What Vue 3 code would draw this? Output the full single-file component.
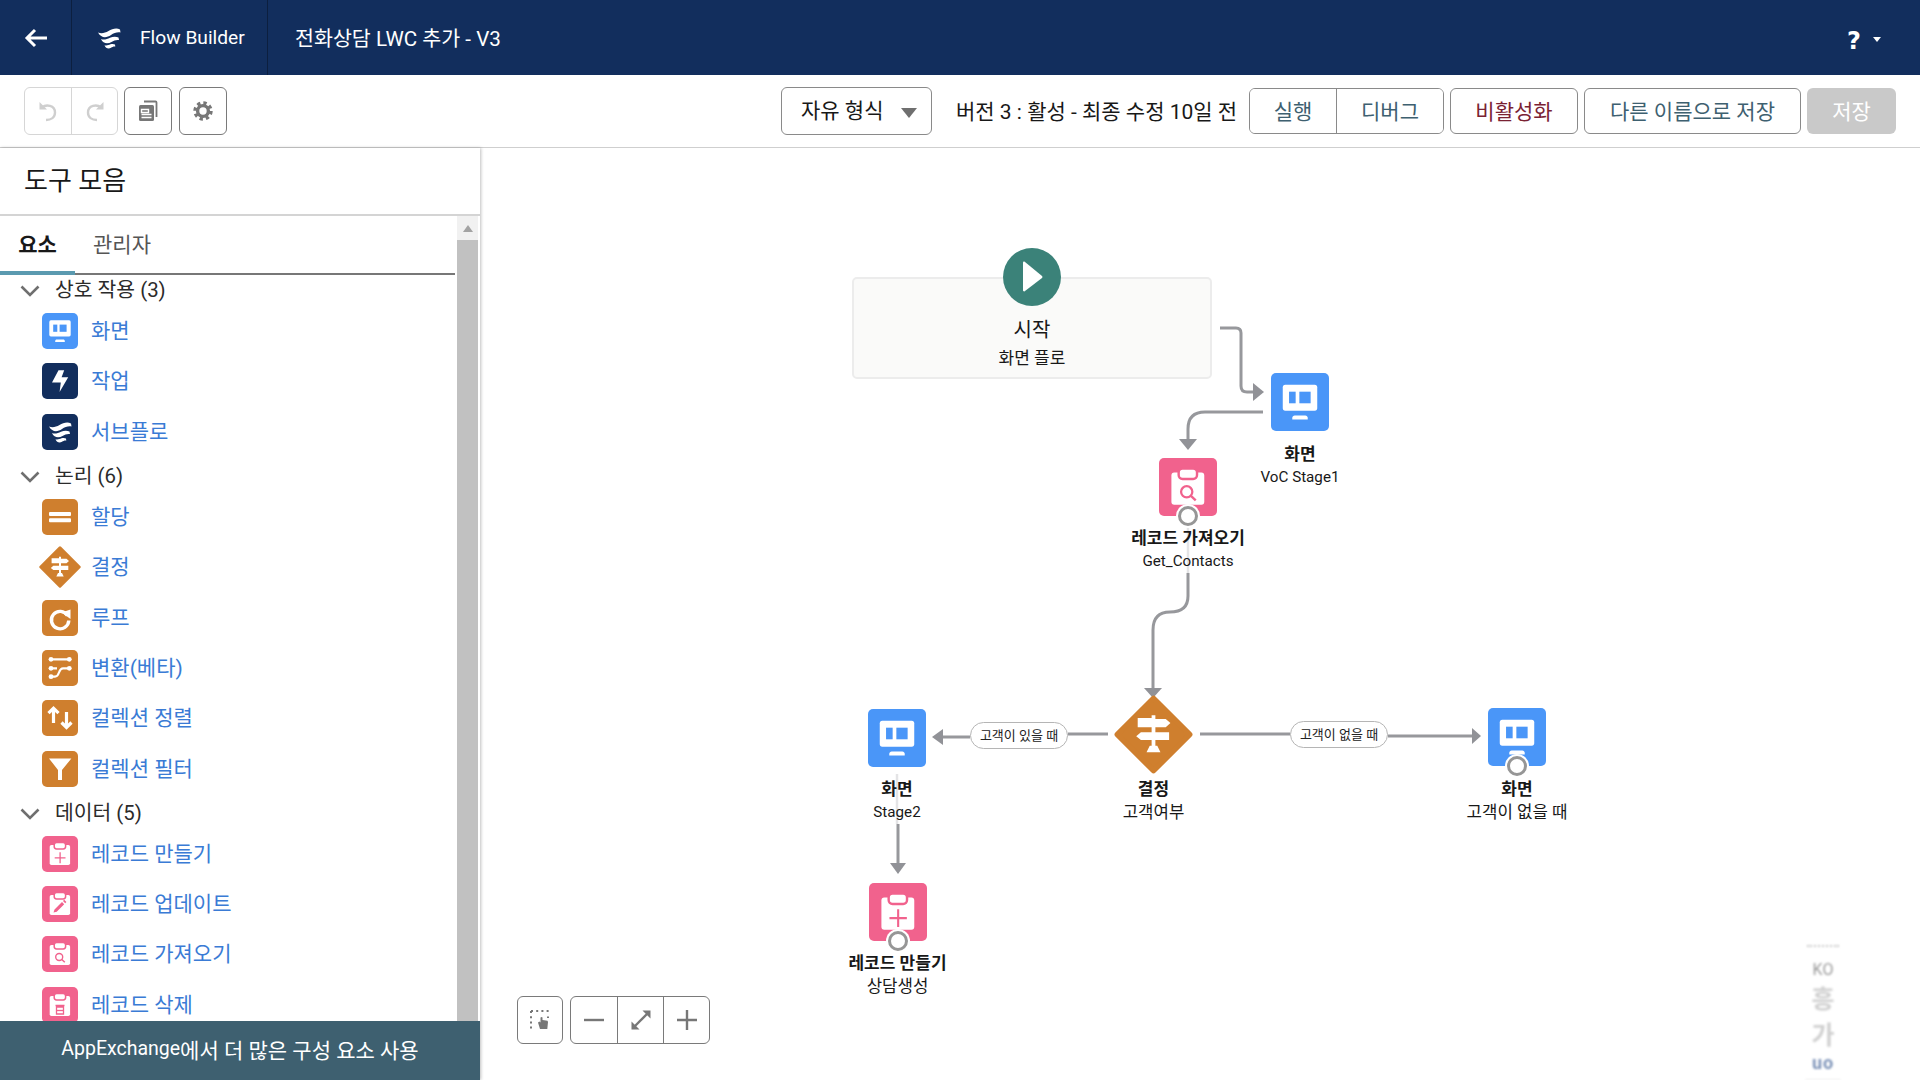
<script setup>
const sections = [
  { title: '상호 작용 (3)', first: true, items: [
    { t: '화면', i: 'screen', c: 'blue' }, { t: '작업', i: 'bolt', c: 'navy' }, { t: '서브플로', i: 'flow', c: 'navy' } ] },
  { title: '논리 (6)', items: [
    { t: '할당', i: 'equals', c: 'orange' }, { t: '결정', i: 'decision', c: 'none' }, { t: '루프', i: 'loop', c: 'orange' },
    { t: '변환(베타)', i: 'transform', c: 'orange' }, { t: '컬렉션 정렬', i: 'sort', c: 'orange' }, { t: '컬렉션 필터', i: 'filter', c: 'orange' } ] },
  { title: '데이터 (5)', items: [
    { t: '레코드 만들기', i: 'rec-add', c: 'pink' }, { t: '레코드 업데이트', i: 'rec-edit', c: 'pink' },
    { t: '레코드 가져오기', i: 'rec-find', c: 'pink' }, { t: '레코드 삭제', i: 'rec-del', c: 'pink' } ] }
]

const OX = 480
const OY = 148
const nodes = [
  { cx: 1300, top: 373, size: 58, i: 'screen', c: 'blue', label: '화면', sub: 'VoC Stage1', gap: 11, latin: true },
  { cx: 1188, top: 458, size: 58, i: 'rec-find', c: 'pink', label: '레코드 가져오기', sub: 'Get_Contacts', gap: 10, dot: true, latin: true },
  { cx: 897, top: 709, size: 58, i: 'screen', c: 'blue', label: '화면', sub: 'Stage2', gap: 10, latin: true },
  { cx: 1153.5, top: 695, size: 79, i: 'decision', c: 'none', label: '결정', sub: '고객여부', gap: 3 },
  { cx: 1517, top: 708, size: 58, i: 'screen', c: 'blue', label: '화면', sub: '고객이 없을 때', gap: 11, dot: true },
  { cx: 897.5, top: 883, size: 58, i: 'rec-add', c: 'pink', label: '레코드 만들기', sub: '상담생성', gap: 10, dot: true }
]
const pills = [
  { x: 970, y: 722, w: 98, t: '고객이 있을 때' },
  { x: 1290, y: 721, w: 98, t: '고객이 없을 때' }
]
function nodeStyle(n) {
  return { left: n.cx - OX - 100 + 'px', top: n.top - OY + 'px' }
}
function iconStyle(n) {
  return { width: n.size + 'px', height: n.size + 'px' }
}
function labelStyle(n) {
  return { marginTop: n.gap + 'px' }
}
function pillStyle(p) {
  return { left: p.x - OX + 'px', top: p.y - OY + 'px', width: p.w + 'px' }
}
</script>

<template>
  <div class="page">
    <svg class="defs" width="0" height="0" aria-hidden="true">
      <defs>
        <symbol id="i-screen" viewBox="0 0 36 36">
          <rect x="7.3" y="7.3" width="21.4" height="16.1" rx="1.6" fill="#fff" />
          <rect x="11.2" y="11.6" width="4.1" height="7.2" fill="#4a96f8" />
          <rect x="17.6" y="11.6" width="7" height="7.2" fill="#4a96f8" />
          <path d="M13.2 28.9v-1c0-.9.7-1.5 1.5-1.5h6.6c.8 0 1.5.6 1.5 1.5v1z" fill="#fff" />
        </symbol>
        <symbol id="i-bolt" viewBox="0 0 36 36">
          <path d="M16.5 7.3h5.7l-2.6 7h6.6L17.6 29l1.2-9.6H10z" fill="#fff" />
        </symbol>
        <symbol id="i-flow" viewBox="0 0 36 36">
          <path d="M7 12.500c3.500 1.500 7 .5 10.500-1.500 3.500-2 8-3.500 11.500-1.500l.5 3c-3.500-.5-6.500.5-9.500 2.500-4.500 3-9.500 3.500-13-2.500z" fill="#fff" />
          <path d="M10 19c3 1.300 6 0 9-1.300 2.800-1.200 6-1.500 8.500-.2l.5 2.500c-3-.4-5 .5-7.500 2-3.500 2-8.500 2-10.500-3z" fill="#fff" />
          <path d="M13.500 25.200c2 .8 4-.2 6-.9 1.700-.5 3.200-.5 4.500.3l.3 2c-1.800-.3-3 .4-4.300 1.200-2.300 1.300-5.300.8-6.500-2.600z" fill="#fff" />
        </symbol>
        <symbol id="i-equals" viewBox="0 0 36 36">
          <rect x="7" y="13" width="22" height="4" rx="1" fill="#fff" />
          <rect x="7" y="19.300" width="22" height="4" rx="1" fill="#fff" />
        </symbol>
        <symbol id="i-decision" viewBox="0 0 42 42">
          <path d="M21 1.800 40.200 21 21 40.200 1.800 21z" fill="#cf7f2e" stroke="#cf7f2e" stroke-width="3" stroke-linejoin="round" />
          <path d="M20 10.700h2v2h5.500l2.500 2.200-2.500 2.300H22v2.600h7.300v4.100H22V27h1l1.700 3.400h-7.400L19 27h1v-3.100h-5.700l-2.500-2 2.500-2.100H20v-2.600h-7.400v-5H20z" fill="#fff" />
        </symbol>
        <symbol id="i-loop" viewBox="0 0 36 36">
          <path d="M25.500 15.500a8.700 8.700 0 1 0 1.300 5" fill="none" stroke="#fff" stroke-width="3.400" />
          <path d="M19.500 12.500 28.500 9.500v9.500z" fill="#fff" />
        </symbol>
        <symbol id="i-transform" viewBox="0 0 36 36" >
          <g fill="none" stroke="#fff" stroke-width="2.200">
            <path d="M9 9.300h18.300M9 18.300h6M9 26.700h4c5 0 3-8.400 8-8.400h6.300" />
          </g>
          <g fill="#fff">
            <circle cx="9" cy="9.300" r="2.400" /><circle cx="27.300" cy="9.300" r="2.400" />
            <circle cx="9" cy="18.300" r="2.400" /><circle cx="27.300" cy="18.300" r="2.400" />
            <circle cx="9" cy="26.700" r="2.400" />
          </g>
        </symbol>
        <symbol id="i-sort" viewBox="0 0 36 36">
          <g fill="none" stroke="#fff" stroke-width="3.200">
            <path d="M11.500 9v14M6.500 13.200l5-5 5 5M24.500 12v15M19.500 22.500l5 5 5-5" />
          </g>
        </symbol>
        <symbol id="i-filter" viewBox="0 0 36 36">
          <path d="M7 7.400h22.400L20 19v10h-4V19z" fill="#fff" />
        </symbol>
        <symbol id="i-clip" viewBox="0 0 36 36">
          <rect x="7.700" y="9" width="20.400" height="20" rx="1.800" fill="#fff" />
          <rect x="12.200" y="6.600" width="11.400" height="6.400" rx="2.400" fill="#fff" stroke="#f1628d" stroke-width="1.500" />
        </symbol>
        <symbol id="i-rec-add" viewBox="0 0 36 36">
          <use href="#i-clip" width="36" height="36" />
          <path d="M18.100 16.300v11M12.700 21.800h10.800" stroke="#f1628d" stroke-width="1.300" fill="none" />
        </symbol>
        <symbol id="i-rec-edit" viewBox="0 0 36 36">
          <use href="#i-clip" width="36" height="36" />
          <path d="M11.500 26.500l1-3 7.500-7.500 2.200 2.200-7.500 7.500zM21 15l1.200-1.200 2.200 2.200-1.200 1.200z" fill="#f1628d" />
        </symbol>
        <symbol id="i-rec-find" viewBox="0 0 36 36">
          <use href="#i-clip" width="36" height="36" />
          <circle cx="17.200" cy="21" r="3.500" fill="none" stroke="#f1628d" stroke-width="1.400" />
          <path d="M19.800 23.500l3 2.800" stroke="#f1628d" stroke-width="1.500" fill="none" />
        </symbol>
        <symbol id="i-rec-del" viewBox="0 0 36 36">
          <use href="#i-clip" width="36" height="36" />
          <path d="M13.500 18.500h9M14.500 20h7v7h-7z" stroke="#f1628d" stroke-width="1.300" fill="none" />
          <path d="M14.500 23.500h7" stroke="#f1628d" stroke-width="1.300" />
        </symbol>
      </defs>
    </svg>

    <header class="topbar">
      <div class="back">
        <svg width="24" height="20" viewBox="0 0 24 20"><path d="M23 10H3M11 2l-8 8 8 8" fill="none" stroke="#fff" stroke-width="3" /></svg>
      </div>
      <div class="brand">
        <svg class="brand-logo" width="36" height="36"><use href="#i-flow" /></svg>
        <span>Flow Builder</span>
      </div>
      <div class="flow-title">전화상담 LWC 추가 - V3</div>
      <div class="help"><span class="q">?</span><span class="help-caret"></span></div>
    </header>

    <div class="toolbar">
      <div class="tool-left">
        <div class="btn-group muted">
          <button class="tool-btn">
            <svg width="20" height="22" viewBox="0 0 20 22"><path d="M1.500 2 1.500 9.500 9 9.500z" fill="#cfcfcf" /><path d="M4 7.500c4-3.500 13-2.500 13 5 0 5-4 7.500-9 7.500" fill="none" stroke="#cfcfcf" stroke-width="2.400" /></svg>
          </button>
          <button class="tool-btn">
            <svg width="20" height="22" viewBox="0 0 20 22"><path d="M18.500 2v7.500H11z" fill="#cfcfcf" /><path d="M16 7.500c-4-3.500-13-2.500-13 5 0 5 4 7.500 9 7.500" fill="none" stroke="#cfcfcf" stroke-width="2.400" /></svg>
          </button>
        </div>
        <button class="tool-btn single">
          <svg width="20" height="22" viewBox="0 0 20 22"><path d="M6 1.500h11.500c.8 0 1 .5 1 1V17" fill="none" stroke="#777" stroke-width="1.800" /><rect x="1" y="5" width="15" height="16" rx="1.500" fill="#777" /><path d="M3.500 9.500h7v3h-7zM3.500 14.500h10M3.500 17.500h10" fill="none" stroke="#fff" stroke-width="1.400" /></svg>
        </button>
        <button class="tool-btn single gear">
          <svg width="20" height="22" viewBox="0 0 20 22"><circle cx="10" cy="11" r="8" fill="none" stroke="#777" stroke-width="3.400" stroke-dasharray="3.300 3.000" /><circle cx="10" cy="11" r="5.400" fill="none" stroke="#777" stroke-width="3.400" /></svg>
        </button>
      </div>
      <div class="tool-right">
        <div class="select">
          <span>자유 형식</span><span class="select-caret"></span>
        </div>
        <div class="version">버전 3 : 활성 - 최종 수정 10일 전</div>
        <div class="btn-group action">
          <button class="act first">실행</button>
          <button class="act second">디버그</button>
        </div>
        <button class="act solo deact">비활성화</button>
        <button class="act solo saveas">다른 이름으로 저장</button>
        <button class="save">저장</button>
      </div>
    </div>

    <div class="main">
      <aside class="panel">
        <div class="panel-title">도구 모음</div>
        <div class="panel-body">
          <div class="list-wrap">
            <div class="tabs">
              <div class="tab active">요소</div>
              <div class="tab">관리자</div>
            </div>
            <div class="list">
              <section v-for="s in sections" :key="s.title">
                <div class="sec-head" :class="{ first: s.first }">
                  <svg class="chev" width="20" height="12" viewBox="0 0 20 12"><path d="M1.500 1.500 10 10l8.500-8.500" fill="none" stroke="#6f6f6f" stroke-width="2.600" /></svg>
                  <span class="sec-text">{{ s.title }}</span>
                </div>
                <div v-for="it in s.items" :key="it.t" class="row">
                  <div class="ico" :class="it.c">
                    <svg :class="{ wide: it.i === 'decision' }"><use :href="'#i-' + it.i" /></svg>
                  </div>
                  <span class="row-text">{{ it.t }}</span>
                </div>
              </section>
            </div>
          </div>
          <div class="scroll">
            <div class="scroll-btn"><span></span></div>
            <div class="thumb"></div>
          </div>
        </div>
        <div class="panel-foot"><span class="foot-latin">AppExchange</span>에서 더 많은 구성 요소 사용</div>
      </aside>

      <main class="canvas">
        <svg class="wires" width="1440" height="932" viewBox="480 148 1440 932">
          <g fill="none" stroke="#e4e4e6" stroke-width="2.500">
            <path d="M1188 525V573" />
            <path d="M897 774V824" />
          </g>
          <g fill="none" stroke="#97989c" stroke-width="3">
            <path d="M1220 328H1236Q1241 328 1241 333V386Q1241 392 1247 392H1254" />
            <path d="M1263 412H1205Q1188 412 1188 429V440" />
            <path d="M1188 573V596Q1188 612 1170 612Q1153 612 1153 630V689" />
            <path d="M1108 734H1068M970 737H943" />
            <path d="M1200 734H1290M1388 736H1473" />
            <path d="M898 824V864" />
          </g>
          <g fill="#919297">
            <path d="M1264 392 1253 383V401z" />
            <path d="M1188 450 1179 439H1197z" />
            <path d="M1153 698 1144 688H1162z" />
            <path d="M932 737 943 729V745z" />
            <path d="M1481 736 1472 728V744z" />
            <path d="M898 874 890 863H906z" />
          </g>
        </svg>

        <div class="start">
          <div class="start-main">시작</div>
          <div class="start-sub">화면 플로</div>
          <div class="play">
            <svg width="58" height="58" viewBox="0 0 58 58"><path d="M20 14.800c0-1 1-1.500 1.700-1L39 28c.6.500.6 1.400 0 1.900L21.700 43.200c-.7.500-1.700 0-1.700-1z" fill="#fff" /></svg>
          </div>
        </div>

        <div v-for="n in nodes" :key="n.label + n.sub" class="node" :style="nodeStyle(n)">
          <div class="node-ico" :class="n.c" :style="iconStyle(n)">
            <svg><use :href="'#i-' + n.i" /></svg>
            <span v-if="n.dot" class="dot"></span>
          </div>
          <div class="node-label" :style="labelStyle(n)">{{ n.label }}</div>
          <div class="node-sub" :class="{ latin: n.latin }">{{ n.sub }}</div>
        </div>

        <div v-for="p in pills" :key="p.t" class="pill" :style="pillStyle(p)">{{ p.t }}</div>

        <div class="zoom-tools">
          <button class="zt box">
            <svg width="20" height="20" viewBox="0 0 20 20"><path d="M1 1h18M1 1v18" fill="none" stroke="#777" stroke-width="2" stroke-dasharray="2 3.200" /><path d="M18 6.500v1.500" stroke="#777" stroke-width="2" /><path d="M8 12.500l1.500-1 1 1V7.500l1.400-.5.600.500V10l5 .8.500 1.200-.700 7H10z" fill="#777" /></svg>
          </button>
          <div class="zt-group">
            <button class="zt">
              <svg width="20" height="20" viewBox="0 0 20 20"><path d="M0 10h20" stroke="#777" stroke-width="2.400" /></svg>
            </button>
            <button class="zt">
              <svg width="22" height="22" viewBox="0 0 22 22"><path d="M3 19 19 3" stroke="#777" stroke-width="2.400" /><path d="M12.500 1.500h8v8zM9.500 20.500h-8v-8z" fill="#777" /></svg>
            </button>
            <button class="zt">
              <svg width="20" height="20" viewBox="0 0 20 20"><path d="M0 10h20M10 0v20" stroke="#777" stroke-width="2.400" /></svg>
            </button>
          </div>
        </div>

        <div class="ime">
          <div class="ime-dots"></div>
          <div class="ime-ko">KO</div>
          <div class="ime-big">흥</div>
          <div class="ime-big">가</div>
          <div class="ime-cut">uo</div>
        </div>
      </main>
    </div>
  </div>
</template>

<style>
html, body { margin: 0; padding: 0; background: #fff; }
</style>

<style scoped>
.page {
  width: 1920px;
  height: 1080px;
  display: flex;
  flex-direction: column;
  overflow: hidden;
  font-family: "Roboto", "Noto Sans CJK KR", sans-serif;
  color: #181818;
  background: #fff;
}
.defs { position: absolute; }
button { font-family: inherit; background: #fff; padding: 0; margin: 0; }

.topbar {
  height: 75px;
  background: #122e5d;
  color: #fff;
  display: flex;
  align-items: center;
  flex: none;
}
.back {
  width: 72px;
  height: 75px;
  box-sizing: border-box;
  border-right: 1px solid #0c1f3f;
  display: flex;
  align-items: center;
  padding-left: 24px;
}
.brand {
  width: 196px;
  height: 75px;
  box-sizing: border-box;
  border-right: 1px solid #0c1f3f;
  display: flex;
  align-items: center;
  padding-left: 19px;
  font-size: 19.2px;
}
.brand-logo { margin-right: 13px; margin-top: 1px; }
.flow-title { padding-left: 27px; font-size: 20.6px; padding-bottom: 1px; }
.help { margin-left: auto; display: flex; align-items: center; padding-right: 39px; padding-top: 6px; }
.q { font-family: "DejaVu Sans", sans-serif; font-weight: 700; font-size: 24px; line-height: 30px; }
.help-caret {
  width: 0; height: 0; margin-left: 12px; margin-top: -2px;
  border-left: 4.5px solid transparent; border-right: 4.5px solid transparent; border-top: 5px solid #fff;
}

.toolbar {
  height: 73px;
  box-sizing: border-box;
  border-bottom: 1px solid #cfcfcf;
  display: flex;
  align-items: center;
  justify-content: space-between;
  flex: none;
  padding: 0 24px;
}
.tool-left { display: flex; align-items: center; gap: 6px; }
.btn-group { display: flex; border-radius: 6px; }
.btn-group.muted { border: 1px solid #d6d6d6; }
.tool-btn {
  width: 46px;
  height: 46px;
  border: 0;
  display: flex;
  align-items: center;
  justify-content: center;
  background: transparent;
}
.muted .tool-btn + .tool-btn { border-left: 1px solid #d6d6d6; }
.tool-btn.single {
  width: 48px;
  height: 48px;
  border: 1px solid #7a7a7a;
  border-radius: 6px;
  box-sizing: border-box;
}
.tool-btn.gear { margin-left: 1px; }
.tool-right { display: flex; align-items: center; }
.select {
  width: 151px;
  height: 48px;
  box-sizing: border-box;
  border: 1px solid #8a8a8a;
  border-radius: 6px;
  display: flex;
  align-items: center;
  justify-content: space-between;
  padding: 0 14px 4px 19px;
  font-size: 21px;
}
.select-caret {
  width: 0; height: 0; margin-top: 8px;
  border-left: 8px solid transparent; border-right: 8px solid transparent; border-top: 10px solid #6f6f6f;
}
.version { font-size: 21px; width: 317px; padding: 0 0 2px 24px; box-sizing: border-box; white-space: nowrap; }
.btn-group.action { border: 1px solid #8a8a8a; border-radius: 6px; height: 46px; box-sizing: border-box; margin-right: 6px; overflow: hidden; }
.act { font-size: 21px; color: #3e6070; border: 0; padding-bottom: 2px; }
.act.first { width: 87px; border-right: 1px solid #8a8a8a; }
.act.second { width: 106px; }
.act.solo { height: 46px; border: 1px solid #8a8a8a; border-radius: 6px; box-sizing: border-box; }
.act.deact { width: 128px; margin-right: 6px; color: #7a2233; }
.saveas { width: 217px; margin-right: 6px; }
.save {
  width: 89px; height: 46px; border: 0; border-radius: 6px;
  background: #c9c9c9; color: #fff; font-size: 21px; padding-bottom: 2px;
}

.main { flex: 1; display: flex; min-height: 0; }
.panel {
  width: 480px;
  flex: none;
  display: flex;
  flex-direction: column;
  background: #fff;
  box-shadow: 1px 0 3px rgba(0, 0, 0, 0.25);
  position: relative;
  z-index: 2;
}
.panel-title {
  height: 66px;
  flex: none;
  box-sizing: content-box;
  border-bottom: 2px solid #d4d4d4;
  display: flex;
  align-items: center;
  padding-left: 24px;
  padding-bottom: 0;
  font-size: 26px;
  line-height: 60px;
}
.panel-body { flex: 1; min-height: 0; display: flex; overflow: hidden; }
.list-wrap { width: 455px; flex: none; }
.tabs {
  height: 57px;
  border-bottom: 2px solid #777;
  display: flex;
  font-size: 21px;
  color: #555;
}
.tab { padding: 0 18px 4px; display: flex; align-items: center; position: relative; height: 57px; box-sizing: border-box; }
.tab.active { width: 75px; box-sizing: border-box; font-weight: 700; color: #181818; justify-content: center; padding: 0 0 4px; }
.tab.active::after { content: ""; position: absolute; left: 0; right: 0; bottom: -2px; height: 4px; background: #5b9ab0; }
.sec-head {
  height: 35px;
  box-sizing: border-box;
  padding: 3px 0 0 20px;
  display: flex;
  align-items: center;
  gap: 15px;
  font-size: 20.4px;
  color: #2b2b2b;
}
.sec-text { padding-bottom: 3px; }
.chev { margin-top: 3px; flex: none; }
.sec-head.first { height: 31px; padding: 0 0 3px 20px; }
.row { height: 50.3px; display: flex; align-items: center; padding-left: 42px; gap: 13px; font-size: 21px; color: #3a7bd5; }
.row-text { padding-bottom: 4px; }
.ico { width: 36px; height: 36px; border-radius: 5px; position: relative; flex: none; }
.ico svg { width: 36px; height: 36px; display: block; }
.ico svg.wide { width: 42px; height: 42px; margin: -3px; }
.blue { background: #4a96f8; }
.navy { background: #122e5d; }
.orange { background: #cf7f2e; }
.pink { background: #f1628d; }
.none { background: transparent; }
.scroll { width: 25px; flex: none; padding: 0 2px; box-sizing: border-box; background: #fff; display: flex; flex-direction: column; }
.scroll-btn { height: 24px; background: #f1f1f1; display: flex; align-items: center; justify-content: center; }
.scroll-btn span { width: 0; height: 0; border-left: 5.5px solid transparent; border-right: 5.5px solid transparent; border-bottom: 7px solid #a3a3a3; }
.thumb { flex: 1; background: #c1c1c1; }
.panel-foot {
  height: 59px;
  box-sizing: border-box;
  padding-bottom: 4px;
  flex: none;
  background: #3e6070;
  color: #fff;
  display: flex;
  align-items: center;
  justify-content: center;
  font-size: 21px;
}
.foot-latin { font-size: 19.5px; }

.canvas { flex: 1; position: relative; overflow: hidden; background: #fff; }
.wires { position: absolute; left: 0; top: 0; }
.start {
  position: absolute;
  left: 372px;
  top: 129px;
  width: 360px;
  height: 102px;
  box-sizing: border-box;
  background: #fafaf9;
  border: 2px solid #ececec;
  border-radius: 5px;
  display: flex;
  flex-direction: column;
  align-items: center;
  padding-top: 37px;
  color: #181818;
}
.start-main { font-size: 20px; line-height: 28px; }
.start-sub { font-size: 17px; line-height: 26px; margin-top: 1px; }
.play {
  position: absolute;
  left: 149px;
  top: -31px;
  width: 58px;
  height: 58px;
  border-radius: 50%;
  background: #3b8279;
}
.node {
  position: absolute;
  width: 200px;
  display: flex;
  flex-direction: column;
  align-items: center;
}
.node-ico { border-radius: 5px; position: relative; flex: none; }
.node-ico svg { width: 100%; height: 100%; display: block; }
.dot {
  position: absolute;
  left: 50%;
  bottom: -10px;
  width: 20px;
  height: 20px;
  box-sizing: border-box;
  margin-left: -10px;
  border: 3px solid #969696;
  border-radius: 50%;
  background: #fff;
  box-shadow: 0 0 0 2px #fff;
}
.node-label { font-size: 17px; font-weight: 700; line-height: 24px; position: relative; white-space: nowrap; color: #181818; }
.node-sub { font-size: 16.75px; line-height: 24px; margin-top: -1px; position: relative; white-space: nowrap; color: #181818; }
.node-sub.latin { font-size: 15.2px; }
.pill {
  position: absolute;
  height: 27px;
  box-sizing: border-box;
  border: 1px solid #b5b5b5;
  border-radius: 14px;
  background: #fff;
  font-size: 13px;
  padding-bottom: 2px;
  display: flex;
  align-items: center;
  justify-content: center;
  white-space: nowrap;
  color: #222;
}
.zoom-tools { position: absolute; left: 37px; top: 848px; display: flex; gap: 7px; }
.zt {
  height: 48px;
  width: 46px;
  border: 0;
  display: flex;
  align-items: center;
  justify-content: center;
  background: transparent;
}
.zt.box { border: 1px solid #7a7a7a; border-radius: 6px; box-sizing: border-box; background: #fff; }
.zt-group { display: flex; height: 48px; box-sizing: border-box; border: 1px solid #7a7a7a; border-radius: 6px; overflow: hidden; background: #fff; align-items: center; }
.zt-group .zt { height: 46px; }
.zt-group .zt + .zt { border-left: 1px solid #7a7a7a; }
.ime {
  position: absolute;
  left: 1325px;
  top: 797px;
  width: 36px;
  height: 135px;
  display: flex;
  flex-direction: column;
  align-items: center;
  color: #b5b5b5;
  filter: blur(0.8px);
  border-bottom: 1px solid #eee;
  box-sizing: border-box;
}
.ime-dots { width: 32px; border-top: 2px dotted #c8c8c8; }
.ime-ko { font-size: 16px; line-height: 22px; margin-top: 12px; color: #999; }
.ime-big { font-size: 25px; line-height: 34px; margin-top: 2px; font-weight: 700; color: #d0d0d0; }
.ime-cut { font-size: 18px; line-height: 14px; margin-top: 3px; color: #7d93b8; letter-spacing: 1px; font-weight: 700; }
</style>
